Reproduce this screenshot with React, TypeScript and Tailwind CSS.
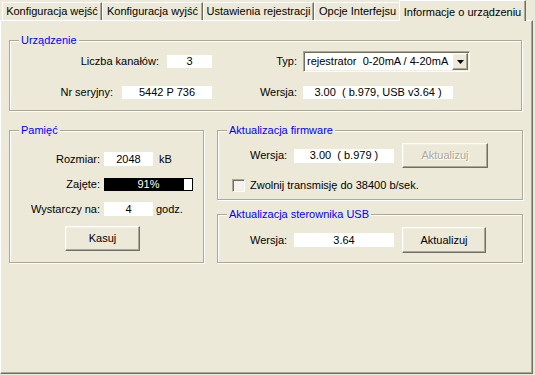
import type { ReactNode } from 'react';

const tabs = [
  { label: 'Konfiguracja wejść', w: 'w-[100px]' },
  { label: 'Konfiguracja wyjść', w: 'w-[101px]' },
  { label: 'Ustawienia rejestracji', w: 'w-[111px]' },
  { label: 'Opcje Interfejsu', w: 'w-[87px]' },
];

const raised =
  'border border-t-white border-l-white border-r-[#716F64] border-b-[#716F64] shadow-[inset_-1px_-1px_0_#ACA899,inset_1px_1px_0_#F1EFE2]';
const sunken =
  'border border-t-[#ACA899] border-l-[#ACA899] border-r-white border-b-white shadow-[inset_1px_1px_0_#716F64,inset_-1px_-1px_0_#F1EFE2]';

function Group({ title, className, children }: { title: string; className: string; children: ReactNode }) {
  return (
    <div
      className={`relative border border-[#ACA899] shadow-[inset_1px_1px_0_#fff,1px_1px_0_#fff] ${className}`}
    >
      <span className="absolute left-[9px] top-[-8px] bg-[#ECE9D8] px-[2px] leading-[14px] text-[#0000FF]">
        {title}
      </span>
      {children}
    </div>
  );
}

function Field({ value, className }: { value: string; className: string }) {
  return (
    <div className={`flex items-center justify-center whitespace-pre bg-white leading-none ${className}`}>
      {value}
    </div>
  );
}

function Button({ label, disabled, className }: { label: string; disabled?: boolean; className: string }) {
  return (
    <div
      className={`flex items-center justify-center bg-[#ECE9D8] ${raised} ${className} ${
        disabled ? 'text-[#ACA899] [text-shadow:1px_1px_0_#fff]' : ''
      }`}
    >
      {label}
    </div>
  );
}

export default function App() {
  return (
    <div className="h-[375px] w-[535px] overflow-hidden bg-[#ECE9D8] font-['Liberation_Sans',Arial,sans-serif] text-[11px] text-black">
      {/* tab strip */}
      <div className="flex h-[20px] items-end pl-[2px]">
        {tabs.map((t) => (
          <div
            key={t.label}
            className={`flex h-[18px] items-center justify-center whitespace-nowrap border-l border-t border-r border-white border-r-[#716F64] pb-[1px] shadow-[inset_-1px_0_0_#ACA899] ${t.w}`}
          >
            {t.label}
          </div>
        ))}
        <div className="relative z-10 -mb-[1px] -ml-[2px] flex h-[21px] w-[127px] items-start justify-center whitespace-nowrap border-l border-t border-r border-white border-r-[#716F64] bg-[#ECE9D8] pt-[3px] shadow-[inset_-1px_0_0_#ACA899]">
          Informacje o urządzeniu
        </div>
      </div>

      {/* tab page */}
      <div className="h-[354px] w-[533px] border border-l-white border-t-white border-r-[#716F64] border-b-[#716F64] pl-[8px] pt-[19px] shadow-[inset_-1px_-1px_0_#ACA899]">
        <Group title="Urządzenie" className="h-[71px] w-[513px]">
          <div className="flex pt-[10px]">
            <div className="flex w-[202px] flex-col items-end gap-[10px]">
              <div className="flex h-[21px] items-center gap-[8px]">
                <span>Liczba kanałów:</span>
                <Field value="3" className="h-[13px] w-[45px]" />
              </div>
              <div className="flex h-[21px] items-center gap-[9px]">
                <span>Nr seryjny:</span>
                <Field value="5442 P 736" className="h-[13px] w-[90px]" />
              </div>
            </div>
            <div className="grid grid-cols-[85px_auto] gap-x-[6px] gap-y-[10px]">
              <span className="flex h-[21px] items-center justify-end">Typ:</span>
              <div className={`flex h-[21px] w-[167px] items-center bg-white pl-[3px] pr-[1px] ${sunken}`}>
                <span className="flex-1 whitespace-pre">rejestrator  0-20mA / 4-20mA</span>
                <div className={`flex h-[17px] w-[16px] items-center justify-center ${raised} bg-[#ECE9D8]`}>
                  <svg width="7" height="4" viewBox="0 0 7 4">
                    <path d="M0 0h7L3.5 4z" fill="#000" />
                  </svg>
                </div>
              </div>
              <span className="flex h-[21px] items-center justify-end">Wersja:</span>
              <div className="flex h-[21px] items-center">
                <Field value="3.00  ( b.979, USB v3.64 )" className="h-[13px] w-[150px]" />
              </div>
            </div>
          </div>
        </Group>

        <div className="mt-[19px] flex gap-[13px]">
          <Group title="Pamięć" className="h-[133px] w-[195px]">
            <div className="flex flex-col gap-[11px] pt-[21px]">
              <div className="flex h-[14px] items-center">
                <span className="w-[90px] text-right">Rozmiar:</span>
                <Field value="2048" className="ml-[4px] h-[14px] w-[49px]" />
                <span className="ml-[6px]">kB</span>
              </div>
              <div className="flex h-[14px] items-center">
                <span className="w-[90px] text-right">Zajęte:</span>
                <div className="relative ml-[4px] flex h-[13px] w-[89px] border border-black bg-black">
                  <div className="w-[79px] bg-black" />
                  <div className="flex-1 bg-white" />
                  <span className="absolute inset-0 flex items-center justify-center leading-none text-white">
                    91%
                  </span>
                </div>
              </div>
              <div className="flex h-[14px] items-center">
                <span className="w-[90px] text-right">Wystarczy na:</span>
                <Field value="4" className="ml-[4px] h-[14px] w-[49px]" />
                <span className="ml-[3px]">godz.</span>
              </div>
            </div>
            <Button label="Kasuj" className="ml-[55px] mt-[10px] h-[25px] w-[75px]" />
          </Group>

          <div className="flex flex-col gap-[14px]">
            <Group title="Aktualizacja firmware" className="h-[70px] w-[306px]">
              <div className="flex items-center pl-[32px] pt-[12px]">
                <span className="w-[44px]">Wersja:</span>
                <Field value="3.00  ( b.979 )" className="h-[14px] w-[100px]" />
                <Button label="Aktualizuj" disabled className="ml-[8px] h-[25px] w-[86px]" />
              </div>
              <div className="mt-[9px] flex items-center pl-[14px]">
                <div className={`h-[13px] w-[13px] bg-[#F4F3EE] ${sunken}`} />
                <span className="ml-[5px]">Zwolnij transmisję do 38400 b/sek.</span>
              </div>
            </Group>
            <Group title="Aktualizacja sterownika USB" className="h-[49px] w-[306px]">
              <div className="flex items-center pl-[32px] pt-[12px]">
                <span className="w-[44px]">Wersja:</span>
                <Field value="3.64" className="h-[14px] w-[100px]" />
                <Button label="Aktualizuj" className="ml-[8px] h-[26px] w-[84px]" />
              </div>
            </Group>
          </div>
        </div>
      </div>
    </div>
  );
}
